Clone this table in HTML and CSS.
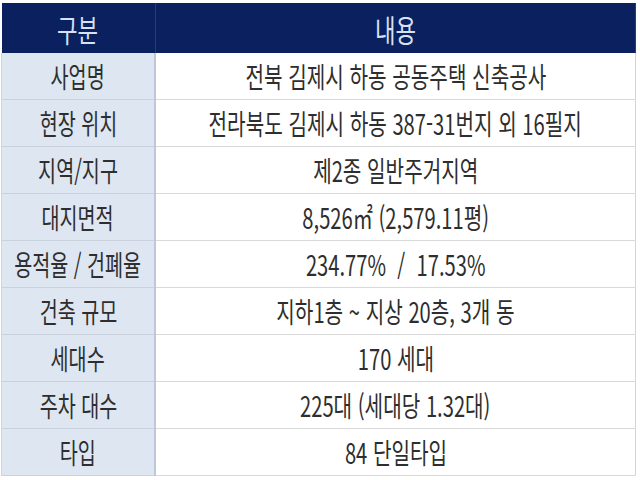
FILE: index.html
```html
<!DOCTYPE html>
<html lang="ko">
<head>
<meta charset="utf-8">
<link rel="stylesheet" href="styles.css">
</head>
<body>
<table class="info">
  <thead>
    <tr><th class="key"><div class="c"><span class="t">구분</span></div></th><th class="val"><div class="c"><span class="t">내용</span></div></th></tr>
  </thead>
  <tbody>
    <tr><td class="key"><div class="c"><span class="t">사업명</span></div></td><td class="val"><div class="c"><span class="t">전북 김제시 하동 공동주택 신축공사</span></div></td></tr>
    <tr><td class="key"><div class="c"><span class="t">현장 위치</span></div></td><td class="val"><div class="c"><span class="t">전라북도 김제시 하동 387-31번지 외 16필지</span></div></td></tr>
    <tr><td class="key"><div class="c"><span class="t">지역/지구</span></div></td><td class="val"><div class="c"><span class="t">제2종 일반주거지역</span></div></td></tr>
    <tr><td class="key"><div class="c"><span class="t">대지면적</span></div></td><td class="val"><div class="c"><span class="t">8,526㎡ (2,579.11평)</span></div></td></tr>
    <tr><td class="key"><div class="c"><span class="t">용적율 / 건폐율</span></div></td><td class="val"><div class="c"><span class="t">234.77% &nbsp;/ &nbsp;17.53%</span></div></td></tr>
    <tr><td class="key"><div class="c"><span class="t">건축 규모</span></div></td><td class="val"><div class="c"><span class="t">지하1층 ~ 지상 20층, 3개 동</span></div></td></tr>
    <tr><td class="key"><div class="c"><span class="t">세대수</span></div></td><td class="val"><div class="c"><span class="t">170 세대</span></div></td></tr>
    <tr><td class="key"><div class="c"><span class="t">주차 대수</span></div></td><td class="val"><div class="c"><span class="t">225대 (세대당 1.32대)</span></div></td></tr>
    <tr><td class="key"><div class="c"><span class="t">타입</span></div></td><td class="val"><div class="c"><span class="t">84 단일타입</span></div></td></tr>
  </tbody>
</table>
</body>
</html>
```
FILE: styles.css
```css
html, body {
  margin: 0;
  padding: 0;
  background: #ffffff;
}
body {
  padding: 3px 4px 0 1px;
  font-family: "Noto Sans CJK KR", "Noto Sans", sans-serif;
  color: #2e2e2e;
}
.info {
  width: 635px;
  border-collapse: collapse;
  table-layout: fixed;
}
.info th, .info td {
  padding: 0;
  vertical-align: middle;
  overflow: hidden;
  white-space: nowrap;
}
.c {
  display: flex;
  justify-content: center;
  align-items: center;
}
.info th {
  height: 50px;
  background: #0b205e;
  color: #d6e2f4;
  font-weight: 400;
  font-size: 31px;
  border-right: 1px solid #2a3c74;
}
.info th.key { width: 153px; }
.info td {
  height: 46px;
  font-size: 28px;
  border-bottom: 1px solid #d9d9d9;
  border-right: 1px solid #d4d4d4;
}
.info td.key {
  background: #dde6f1;
  border-right: 2px solid #bcc8d8;
  border-bottom: 1px solid #c9d1dc;
  border-left: 1px solid #ccd6e2;
}
.t {
  display: inline-block;
  flex: none;
  transform: scaleX(0.7);
  line-height: 1;
}
.info td.val .t { transform: scaleX(0.72); }
.info th .t { transform: scaleX(0.72); }
```
